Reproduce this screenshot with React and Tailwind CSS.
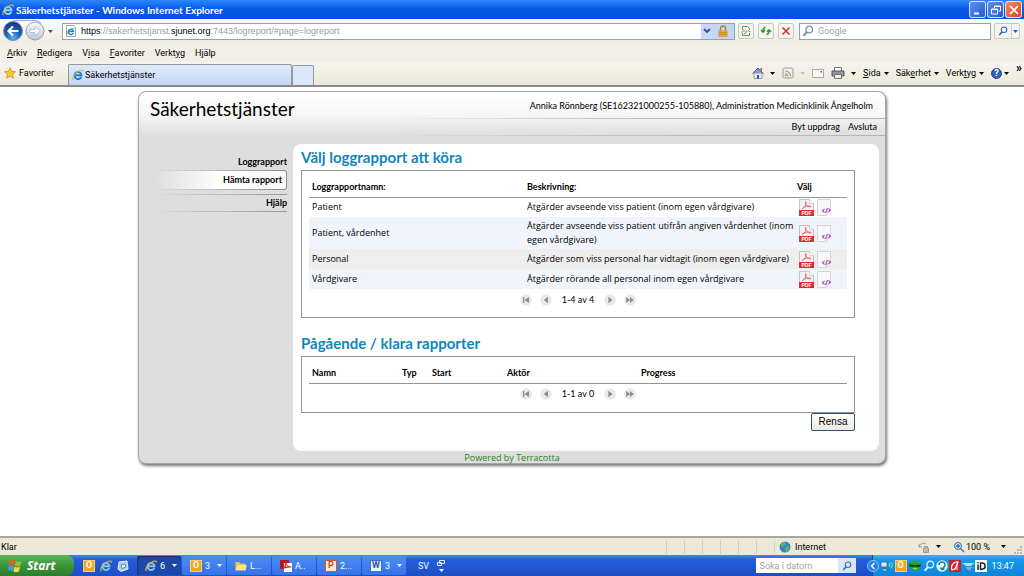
import clsx from 'clsx'
import { useState } from 'react'

const menuItems = [
  ['', 'A', 'rkiv'],
  ['', 'R', 'edigera'],
  ['V', 'i', 'sa'],
  ['', 'F', 'avoriter'],
  ['Verkt', 'y', 'g'],
  ['H', 'j', 'älp']
]

const toolItems = [
  ['', 'S', 'ida'],
  ['Säk', 'e', 'rhet'],
  ['Verk', 't', 'yg']
]

const reports = [
  { name: 'Patient', text: 'Åtgärder avseende viss patient (inom egen vårdgivare)', row: 'h-5' },
  { name: 'Patient, vårdenhet', text: 'Åtgärder avseende viss patient utifrån angiven vårdenhet (inom egen vårdgivare)', row: 'h-8 bg-[#f0f5fb]' },
  { name: 'Personal', text: 'Åtgärder som viss personal har vidtagit (inom egen vårdgivare)', row: 'h-5 bg-[#eeeeee]' },
  { name: 'Vårdgivare', text: 'Åtgärder rörande all personal inom egen vårdgivare', row: 'h-5 bg-[#f0f5fb]' }
]

function AccessKey({ parts }) {
  return <span>{parts[0]}<span className="underline">{parts[1]}</span>{parts[2]}</span>
}

function Caret({ className = 'text-black' }) {
  return <svg viewBox="0 0 5 3" className={clsx('h-[3px] w-[5px] shrink-0', className)}><path d="M0 0h5L2.500 3z" fill="currentColor" /></svg>
}

function IeIcon({ className = 'size-3', body = '#1c7fd6' }) {
  return (
    <svg viewBox="0 0 16 16" className={clsx('shrink-0', className)}>
      <path d="M12.400 10.400A4.700 4.700 0 1 1 12.700 8.400H4.300" fill="none" stroke={body} strokeWidth="2.600" />
      <path d="M2.200 14.800C-.8 13.500 2.500 7.500 7 4.200 11 1.200 15.600 0 15 3.400" fill="none" stroke="#f2b822" strokeWidth="1.500" />
    </svg>
  )
}

function IePage() {
  return (
    <svg viewBox="0 0 12 12" className="size-3 shrink-0">
      <path d="M1.500.5h7l2 2v9h-9z" fill="#fff" stroke="#9aa5ad" />
      <path d="M8.300 8A2.600 2.600 0 1 1 8.500 6.500H3.800" fill="none" stroke="#2483c5" strokeWidth="1.500" />
      <path d="M2 9.500C1.500 7.500 6 3 9.500 3.200" fill="none" stroke="#4aa557" strokeWidth=".8" />
    </svg>
  )
}

function Magnifier({ className = 'size-3 text-[#2860b8]' }) {
  return (
    <svg viewBox="0 0 12 12" className={clsx('shrink-0', className)} fill="none" stroke="currentColor">
      <circle cx="7.200" cy="4.500" r="3.300" strokeWidth="1.300" />
      <path d="M5 7L1.500 10.800" strokeWidth="1.900" />
    </svg>
  )
}

function NavArrows() {
  return (
    <svg viewBox="0 0 44 22" className="h-[22px] w-11 shrink-0">
      <defs>
        <radialGradient id="back" cx=".5" cy=".85" r=".8">
          <stop offset="0" stopColor="#55b2f2" />
          <stop offset=".5" stopColor="#1d5fb8" />
          <stop offset="1" stopColor="#123a84" />
        </radialGradient>
        <linearGradient id="fwd" x1="0" y1="0" x2="0" y2="1">
          <stop offset="0" stopColor="#f8fafc" />
          <stop offset="1" stopColor="#b9c6d6" />
        </linearGradient>
      </defs>
      <path d="M11 .5h23a10 10 0 0 1 5 3" fill="none" stroke="#a5afbd" />
      <circle cx="33" cy="11" r="9" fill="url(#fwd)" stroke="#97a3b5" />
      <path d="M28 9.500h5V6.500l5 4.500-5 4.500v-3h-5z" fill="#fff" stroke="#aab6c4" strokeWidth=".7" />
      <circle cx="11" cy="11" r="9.500" fill="url(#back)" stroke="#7f93b5" />
      <path d="M16.500 11H7M11 6.500L6.500 11l4.500 4.500" fill="none" stroke="#fff" strokeWidth="2.200" />
    </svg>
  )
}

function OfficeIcon({ letter, className }) {
  return <span className={clsx('flex size-3 shrink-0 items-center justify-center border text-[9px] leading-none font-bold', className)}>{letter}</span>
}

function Flag() {
  return (
    <svg viewBox="0 0 16 14" className="h-3.5 w-4 shrink-0">
      <path d="M3 1.500c2-1 3.500-.8 5 .2L7 6.500C5.500 5.500 4 5.300 2 6z" fill="#f0562b" />
      <path d="M8.700 2c1.800 1 3.500 1 5.800 0l-1.200 4.900c-2 .9-3.900.9-5.600-.1z" fill="#86c440" />
      <path d="M1.700 7c2-.8 3.600-.5 5 .4l-1.100 4.800c-1.500-1-3.100-1.200-5-.4z" fill="#4d92ee" />
      <path d="M7.400 7.700c1.900 1 3.700 1 5.700.1L12 12.600c-2 .9-4 .8-5.700-.2z" fill="#fbd238" />
    </svg>
  )
}

function PdfIcon() {
  return (
    <svg viewBox="0 0 15 17" className="h-[17px] w-[15px]">
      <path d="M.5.5h10l4 4v12H.5z" fill="#f1f1f1" stroke="#c3c3c3" />
      <path d="M10.500.5v4h4" fill="#fff" stroke="#c3c3c3" strokeWidth=".7" />
      <path d="M3.300 9.600c2.200-1 4-4 3.800-6.800-.7-1-1.100.8 0 2.600 1.100 1.900 3 2.800 5 2.400-.3-1-3.200-1-5-.4-1.800.5-3.300 1.200-3.800 2.200z" fill="none" stroke="#dd5555" strokeWidth=".8" />
      <path d="M0 11h15v6H0z" fill="#e32a2e" />
      <text x="7.500" y="16" textAnchor="middle" fontSize="5" fontWeight="bold" fontFamily="Liberation Sans, sans-serif" fill="#fff">PDF</text>
    </svg>
  )
}

function XmlIcon() {
  return (
    <svg viewBox="0 0 15 17" className="h-[17px] w-[15px]">
      <path d="M.5.5h13v11L9 16.500H.5z" fill="#f8f8fa" stroke="#d3d3d8" />
      <path d="M9 16.500l.5-4 4-1" fill="#e6e6ea" stroke="#c6c6cc" strokeWidth=".6" />
      <path d="M7.500 10L5.500 11.800l2 1.700M11.500 9.500l2 1.700-2 1.800M10.500 9l-2 5" fill="none" stroke="#b055b8" strokeWidth="1.200" />
    </svg>
  )
}

function PagerButton({ label, d }) {
  return (
    <button aria-label={label}>
      <svg viewBox="0 0 12 12" className="size-3">
        <circle cx="6" cy="6" r="5.800" fill="#e9e9e9" />
        <path d={d} fill="#8c8c8c" />
      </svg>
    </button>
  )
}

function Pager({ range }) {
  return (
    <div className="flex h-[22px] items-center justify-center pb-px">
      <div className="flex w-[116px] items-center gap-2">
        <PagerButton label="Första" d="M3 3h1.300v6H3zM9 3v6L4.500 6z" />
        <PagerButton label="Föregående" d="M8 2.800v6.400L3.800 6z" />
        <span className="flex-1 text-center whitespace-nowrap">{range}</span>
        <PagerButton label="Nästa" d="M4.400 2.800v6.400L8.600 6z" />
        <PagerButton label="Sista" d="M2.200 3v6L6 6zM6 3v6L9.800 6z" />
      </div>
    </div>
  )
}

function TitleBar() {
  const box = 'flex size-[17px] items-center justify-center rounded-[3px] border border-white/80'
  return (
    <header className="flex h-[19px] shrink-0 items-center bg-linear-to-b from-[#2b86fb] via-[#0458e4] to-[#0650dc] px-0.5 text-white">
      <IeIcon className="size-3" body="#8fd0ff" />
      <h1 className="ml-0.5 flex-1 font-['Lato',sans-serif] text-[10px] font-bold">Säkerhetstjänster - Windows Internet Explorer</h1>
      <div className="flex gap-px">
        <button aria-label="Minimera" className={clsx(box, 'bg-linear-to-br from-[#5f8ff2] to-[#2456d8]')}>
          <svg viewBox="0 0 12 12" className="size-3"><path d="M2 8.500h5v2H2z" fill="#fff" /></svg>
        </button>
        <button aria-label="Återställ" className={clsx(box, 'bg-linear-to-br from-[#5f8ff2] to-[#2456d8]')}>
          <svg viewBox="0 0 12 12" className="size-3" fill="none" stroke="#fff"><path d="M4.500 4V2h6v5h-2M4.500 2.500h6" /><path d="M1.500 5h6v5h-6zM1.500 5.500h6" /></svg>
        </button>
        <button aria-label="Stäng" className={clsx(box, 'bg-linear-to-br from-[#f08a66] to-[#d8421c]')}>
          <svg viewBox="0 0 12 12" className="size-3"><path d="M2 2l8 8M10 2l-8 8" stroke="#fff" strokeWidth="1.700" /></svg>
        </button>
      </div>
    </header>
  )
}

function AddressBar() {
  const tool = 'flex h-4 w-4 items-center justify-center rounded-xs border border-[#c5c8c0] bg-[#f6f6ef]'
  return (
    <div className="flex h-6 shrink-0 items-center bg-linear-to-b from-[#fbfbf9] to-[#efede2] pr-1 pl-0.5">
      <NavArrows />
      <Caret className="mr-2 ml-px h-1 w-[7px] text-[#1d5a9c]" />
      <div className="relative flex h-[17px] flex-1 items-center border border-[#8fa3b5] bg-white">
        <input aria-label="Adress" className="absolute inset-0 bg-transparent outline-none" />
        <span className="pointer-events-none relative flex flex-1 items-center gap-1 pl-0.5 whitespace-nowrap">
          <IePage />
          <span className="font-['Liberation_Sans',sans-serif] text-[#9c9c9c]"><span className="text-black">https</span>://sakerhetstjanst.<span className="text-black">sjunet.org</span>:7443/logreport/#page=logreport</span>
        </span>
        <button aria-label="Visa adresser" className="relative flex h-full w-[11px] items-center justify-center bg-[#c9d9fb]">
          <svg viewBox="0 0 8 6" className="h-1.5 w-2"><path d="M1 1l3 3 3-3" fill="none" stroke="#33518c" strokeWidth="1.800" /></svg>
        </button>
        <button aria-label="Säkerhetsrapport" className="relative flex h-full w-[22px] items-center justify-center bg-[#c3d6f3]">
          <svg viewBox="0 0 12 12" className="size-3"><path d="M3.500 6V3.500a2.500 2.500 0 0 1 5 0V6" fill="none" stroke="#b08425" strokeWidth="1.400" /><path d="M1.500 5.500h9V12h-9z" fill="#e3a52f" /><path d="M1.500 7.500h9M1.500 9.500h9" stroke="#c08420" strokeWidth=".6" /></svg>
        </button>
      </div>
      <div className="ml-[3px] flex gap-1">
        <button aria-label="Kompatibilitetsvy" className={tool}>
          <svg viewBox="0 0 12 12" className="size-3 shrink-0" fill="none" stroke="#4ba04f"><path d="M2.500 5V1.500h5l2 2V5M2.500 8v2.500h7V8" /><path d="M1.500 7.500L4 5.500l2 2 2-2 2.500 1.500M4 9l2-1.500" strokeWidth=".9" /></svg>
        </button>
        <button aria-label="Uppdatera" className={tool}>
          <svg viewBox="0 0 12 12" className="size-3 shrink-0" fill="none" stroke="#2c9a34" strokeWidth="1.500"><path d="M5.500 2.500C3.500 2.500 3 4 3 7M1 5l2 2.200L5 5M6.500 9.500C8.500 9.500 9 8 9 5M7 7l2-2.200L11 7" /></svg>
        </button>
        <button aria-label="Stoppa" className={tool}>
          <svg viewBox="0 0 12 12" className="size-3 shrink-0"><path d="M2.500 2.500l7 7M9.500 2.500l-7 7" stroke="#cf2f36" strokeWidth="1.500" /></svg>
        </button>
      </div>
      <label className="ml-[5px] flex h-[17px] w-48 items-center gap-1 border border-[#8fa3b5] bg-white px-0.5">
        <Magnifier className="size-3 text-[#6f93b5]" />
        <input aria-label="Sök" placeholder="Google" className="min-w-0 flex-1 outline-none placeholder:text-[#a3a3a3]" />
      </label>
      <div className="ml-[3px] flex h-4 w-[26px] items-center rounded-xs border border-[#c5c8c0] bg-[#f3f5f4]">
        <button aria-label="Sök på webben" className="flex flex-1 justify-center"><Magnifier className="size-2.5 text-[#2860b8]" /></button>
        <button aria-label="Sökalternativ" className="flex h-full w-2 items-center justify-center border-l border-[#d0d3cc]"><Caret className="text-[#2860b8]" /></button>
      </div>
    </div>
  )
}

function TabRow() {
  return (
    <div className="flex h-[23px] shrink-0 bg-linear-to-b from-[#f6f5ef] to-[#ece9d8]">
      <button className="flex w-[68px] items-center gap-[3px] pb-px pl-1">
        <svg viewBox="0 0 12 12" className="size-3 shrink-0"><path d="M6 .8l1.600 3.500 3.900.4-2.900 2.600.8 3.900L6 9.200l-3.400 2 .8-3.900L.5 4.700l3.900-.4z" fill="#fbc63a" stroke="#d28d1c" strokeWidth=".8" /></svg>
        Favoriter
      </button>
      <button className="mt-0.5 flex w-56 items-center gap-px rounded-t-xs border border-b-0 border-[#919b9c] bg-linear-to-b from-[#dfe9fb] to-[#c5d8f8] pl-[3px]">
        <IeIcon className="size-3" /><span>Säkerhetstjänster</span>
      </button>
      <button aria-label="Ny flik" className="mt-[3px] w-[22px] rounded-t-xs border border-b-0 border-[#919b9c] bg-[#dce8fa]" />
      <div className="ml-auto flex items-center gap-[7px] pr-0.5 pb-px">
        <button aria-label="Startsida" className="flex items-center gap-1.5">
          <svg viewBox="0 0 12 12" className="size-3"><path d="M2 6v5.500h8V6" fill="#e9eef8" stroke="#7584a8" strokeWidth=".8" /><path d="M.5 6.500L6 1l5.500 5.500" fill="#8797c4" stroke="#4c5d8b" /><path d="M8.500 1h1.500v3L8.500 2.500z" fill="#b34a35" /><path d="M5 8h2v3.500H5z" fill="#2f4a93" /></svg>
          <Caret />
        </button>
        <button aria-label="Feeds" className="flex items-center gap-1.5">
          <svg viewBox="0 0 12 12" className="size-3" fill="none" stroke="#999"><rect x="1" y="1" width="10" height="10" rx="1.500" fill="#f0efe8" /><path d="M3 6.500A2.800 2.800 0 0 1 5.800 9.300M3 4a5.300 5.300 0 0 1 5.500 5.300" strokeWidth="1.100" /><circle cx="3.700" cy="8.600" r=".6" /></svg>
          <Caret className="text-[#c5c3b8]" />
        </button>
        <button aria-label="Läs e-post">
          <svg viewBox="0 0 12 12" className="size-3"><path d="M.5 2.500h11v8H.5z" fill="#f7f7f7" stroke="#aaa" /><path d="M8.500 4h1.500v1.500H8.500z" fill="#c37" /></svg>
        </button>
        <button aria-label="Skriv ut" className="flex items-center gap-1.5">
          <svg viewBox="0 0 14 12" className="h-3 w-3.5"><path d="M3.500.5h7V5h-7z" fill="#fff" stroke="#777" /><path d="M1 4h12v5H1z" fill="#8f959b" stroke="#555b61" /><path d="M3.500 7.500h7v4h-7z" fill="#eee" stroke="#777" /><path d="M10.500 5.200h1.500v1h-1.500z" fill="#5fd35f" /></svg>
          <Caret />
        </button>
        {toolItems.map((item) => (
          <button key={item[1]} className="flex items-center gap-[3px]"><AccessKey parts={item} /><Caret /></button>
        ))}
        <button aria-label="Hjälp" className="flex items-center gap-0.5">
          <span className="flex size-[11px] items-center justify-center rounded-full border border-[#20448f] bg-[#3565b9] text-[9px] leading-none font-bold text-white">?</span>
          <Caret />
        </button>
        <button aria-label="Fler verktyg" className="self-start text-[12px] leading-none font-bold">»</button>
      </div>
    </div>
  )
}

function SideNav() {
  const line = 'h-px w-full bg-linear-to-r from-transparent to-[#949494]'
  return (
    <nav className="flex w-[154px] shrink-0 flex-col items-end pt-2.5 pr-1.5 pl-4 font-bold">
      <a href="#logg" className="h-4 leading-4">Loggrapport</a>
      <div className="w-full rounded-r-[3px] bg-linear-to-r from-transparent to-[#8c8c8c] p-px pl-0">
        <a href="#hamta" className="block h-[18px] rounded-r-xs bg-linear-to-r from-[#dedede] via-white to-[#fafafa] pr-1 text-right leading-[18px]">Hämta rapport</a>
      </div>
      <div className="h-1" />
      <div className={line} />
      <a href="#hjalp" className="h-4 leading-4">Hjälp</a>
      <div className={line} />
    </nav>
  )
}

function ReportTable() {
  return (
    <div className="border border-[#949494] px-[7px] pt-1.5 pb-1.5">
      <table className="w-full table-fixed text-left">
        <thead>
          <tr className="h-5 border-b border-[#949494]">
            <th className="w-[215px] pl-[3px]">Loggrapportnamn:</th>
            <th className="pl-[3px]">Beskrivning:</th>
            <th className="w-[50px]">Välj</th>
          </tr>
        </thead>
        <tbody className="font-['Open_Sans',sans-serif]">
          {reports.map((r) => (
            <tr key={r.name} className={r.row}>
              <td className="pl-[3px]">{r.name}</td>
              <td className="py-0.5 pl-[3px] leading-[14px]">{r.text}</td>
              <td>
                <div className="flex gap-[3px] pl-0.5">
                  <button aria-label={`${r.name} PDF`}><PdfIcon /></button>
                  <button aria-label={`${r.name} XML`}><XmlIcon /></button>
                </div>
              </td>
            </tr>
          ))}
        </tbody>
      </table>
      <Pager range="1-4 av 4" />
    </div>
  )
}

function RunningTable() {
  return (
    <div className="border border-[#949494] px-[7px] pt-1.5 pb-1.5">
      <table className="w-full table-fixed text-left">
        <thead>
          <tr className="h-5 border-b border-[#949494]">
            <th className="w-[90px] pl-[3px]">Namn</th>
            <th className="w-[30px] pl-[3px]">Typ</th>
            <th className="w-[75px] pl-[3px]">Start</th>
            <th className="w-[134px] pl-[3px]">Aktör</th>
            <th className="pl-[3px]">Progress</th>
          </tr>
        </thead>
      </table>
      <Pager range="1-1 av 0" />
    </div>
  )
}

function Portal() {
  const line = 'h-px w-full bg-linear-to-r from-transparent via-[#c0c0c0] to-[#b4b4b4]'
  return (
    <div className="mx-auto w-full max-w-[748px] rounded-lg border border-[#a5a5a5] bg-[#dedede] font-['Lato',sans-serif] text-[9px] shadow-[1px_2px_3px_#777]">
      <div className="flex justify-between rounded-t-lg bg-linear-to-b from-white via-[#f7f7f7] to-[#dedede] pl-[11px]">
        <h2 className="w-60 pt-[5px] text-[19px] leading-6">Säkerhetstjänster</h2>
        <div className="flex-1 text-right">
          <p className="h-[26px] pr-3 leading-7">Annika Rönnberg (SE162321000255-105880), Administration Medicinklinik Ångelholm</p>
          <div className={line} />
          <div className="flex h-4 items-center justify-end gap-2 pr-2">
            <a href="#uppdrag">Byt uppdrag</a>
            <a href="#avsluta">Avsluta</a>
          </div>
          <div className={line} />
        </div>
      </div>
      <div className="flex pt-2 pr-1.5">
        <SideNav />
        <main className="min-w-0 flex-1 rounded-lg bg-white px-2 pr-6 pb-5">
          <h3 className="h-[26px] text-[15px] leading-[26px] font-bold text-[#0f86bd]">Välj loggrapport att köra</h3>
          <ReportTable />
          <h3 className="mt-3 h-[26px] text-[15px] leading-[26px] font-bold text-[#0f86bd]">Pågående / klara rapporter</h3>
          <RunningTable />
          <div className="flex justify-end">
            <button className="h-[18px] w-11 rounded-xs border border-[#2c4f78] bg-linear-to-b from-white to-[#ece9e0] font-['Liberation_Sans',sans-serif] text-[10px] leading-none">Rensa</button>
          </div>
        </main>
      </div>
      <p className="h-3 text-center font-['Open_Sans',sans-serif] leading-[14px] text-[#1e8520]">Powered by Terracotta</p>
    </div>
  )
}

function StatusBar() {
  return (
    <div className="flex h-[19px] shrink-0 items-center border-t-2 border-[#a9a898] bg-[#ece9d8]">
      <span className="flex-1 pl-px">Klar</span>
      {[0, 1, 2, 3, 4, 5].map((i) => <span key={i} className="h-3.5 w-[18px] border-l border-[#d3d0c0]" />)}
      <span className="flex w-36 items-center gap-1 border-l border-[#d3d0c0] pl-1">
        <svg viewBox="0 0 12 12" className="size-3"><circle cx="6" cy="6" r="5.500" fill="#3484c6" /><path d="M2 3c2-2 4-2 5-1L5 5 2 6zM6 6l4-1v3L7 11z" fill="#5bb85b" /></svg>
        Internet
      </span>
      <button aria-label="Skyddat läge" className="flex items-center gap-1.5">
        <svg viewBox="0 0 12 12" className="size-3" fill="none" stroke="#999"><path d="M1 6c1-3 4-5 7-3M1 3v3h3" /><path d="M5.500 7h5v4.500h-5z" fill="#bbb" /><path d="M6.500 7V5.500h3V7" /></svg>
        <Caret />
      </button>
      <button className="ml-3 flex items-center gap-px">
        <svg viewBox="0 0 12 12" className="size-3" fill="none" stroke="#3568ad"><circle cx="5" cy="5" r="3.500" fill="#d9e9fa" /><path d="M3 5h4M5 3v4M7.500 7.500l3.500 3.500" strokeWidth="1.300" /></svg>
        100 %
        <Caret className="ml-2.5 text-black" />
      </button>
      <svg viewBox="0 0 9 9" className="mr-px ml-2 size-[9px] self-end"><path d="M6 0h2v2H6zM3 3h2v2H3zM6 3h2v2H6zM0 6h2v2H0zM3 6h2v2H3zM6 6h2v2H6z" fill="#bab7a6" /></svg>
    </div>
  )
}

function TaskButton({ children, active, caret }) {
  return (
    <button className={clsx('flex h-[19px] w-11 items-center gap-[3px] rounded-xs pl-2', active ? 'bg-[#1c48a8] shadow-[inset_1px_1px_2px_#0f2f78]' : 'bg-linear-to-b from-[#4b8cf8] to-[#3573e8]')}>
      {children}
      {caret && <Caret className="mr-1 ml-auto text-white" />}
    </button>
  )
}

function Taskbar() {
  const outlook = 'border-[#f7d268] bg-[#f3a51d] text-white'
  return (
    <footer className="flex h-[21px] shrink-0 items-center bg-linear-to-b from-[#4488f0] via-[#245edc] via-20% to-[#1d4fc4] text-white">
      <button className="flex h-full w-[74px] items-center gap-1 rounded-r-lg bg-linear-to-b from-[#5cb55a] via-[#3a963a] to-[#2c7d2c] pl-[7px] font-['Open_Sans',sans-serif] text-[12px] font-bold italic">
        <Flag />Start
      </button>
      <div className="mr-2 ml-[9px] flex items-center gap-[5px]">
        <OfficeIcon letter="O" className={outlook} />
        <IeIcon className="size-3" body="#79c4ff" />
        <svg viewBox="0 0 12 12" className="size-3"><path d="M2 2l8-1 1 8-7 2.500L1 9z" fill="#a9d3f5" stroke="#e7f3fc" /><path d="M4 5l4-1 1 3-4 1.500z" fill="#fff" stroke="#376bb0" strokeWidth=".8" /></svg>
      </div>
      <div className="flex gap-px">
        <TaskButton active caret><IeIcon className="size-3" body="#79c4ff" />6</TaskButton>
        <TaskButton caret><OfficeIcon letter="O" className={outlook} />3</TaskButton>
        <TaskButton>
          <svg viewBox="0 0 12 12" className="size-3 shrink-0"><path d="M.5 2h4l1 1.500h5V10H.5z" fill="#f4c542" /><path d="M2.500 5h9.300L10.500 10.500h-10z" fill="#fde58a" /></svg>
          L...
        </TaskButton>
        <TaskButton>
          <svg viewBox="0 0 12 12" className="size-3 shrink-0"><path d="M0 0h9v9H0z" fill="#b8141c" /><path d="M4 3h8v9H4z" fill="#fff" /><path d="M2 9c3-1 4-4 3.500-7 .5 3 3 5 6 5-3-.5-6 0-9.500 2z" fill="none" stroke="#d22" strokeWidth="1.100" /></svg>
          A..
        </TaskButton>
        <TaskButton><OfficeIcon letter="P" className="border-[#d3532a] bg-[#fbe9e0] text-[#cf4a1d]" />2...</TaskButton>
        <TaskButton caret><OfficeIcon letter="W" className="border-[#3d78c8] bg-[#eef5fd] text-[#1f57a8]" />3</TaskButton>
      </div>
      <span className="ml-3">SV</span>
      <button aria-label="Visa fler" className="ml-2 flex flex-col items-center gap-[3px]">
        <svg viewBox="0 0 8 6" className="h-1.5 w-2" fill="none" stroke="#fff"><path d="M2.500.5h5v3h-5zM.5 2.500h4v3h-4z" strokeWidth=".9" /></svg>
        <Caret className="text-white" />
      </button>
      <label className="ml-auto flex h-[15px] w-[100px] items-center bg-white pl-1 text-black">
        <input aria-label="Sök i datorn" placeholder="Söka i datorn" className="min-w-0 flex-1 outline-none placeholder:text-[#a3a3a3]" />
        <span className="flex h-full w-[18px] items-center justify-center bg-[#d9e6f8]"><Magnifier className="size-2.5 text-[#3b6cae]" /></span>
      </label>
      <div className="ml-4 flex h-full items-center gap-px border-l border-[#0c4ba8] bg-linear-to-b from-[#3fb2f5] via-[#149aec] via-20% to-[#1183da] pr-2.5">
        <button aria-label="Visa dolda ikoner" className="-ml-1.5 flex size-3 items-center justify-center rounded-full border border-[#8ccaff] bg-[#2a7be6]">
          <svg viewBox="0 0 6 8" className="h-2 w-1.5"><path d="M4.500 1l-3 3 3 3" fill="none" stroke="#fff" strokeWidth="1.500" /></svg>
        </button>
        <svg viewBox="0 0 14 12" className="h-3 w-3.5"><path d="M1 2h6v5H1zM3 9h4v2H2z" fill="#dbe8f5" stroke="#34618f" strokeWidth=".8" /><path d="M9 3c1 1 1 3 0 4M11 2c1.500 2 1.500 4.500 0 6.500M13 1" fill="none" stroke="#8bea6d" /></svg>
        <OfficeIcon letter="O" className={outlook} />
        <svg viewBox="0 0 14 12" className="h-3 w-3.5"><path d="M3.500 1.500L7 .5l3.500 1L13.500 5l-2 3L7 11.500 2.500 8l-2-3z" fill="#2ca032" /><path d="M.5 4.500l5.500.5h2l5.500-.5L12 7H9L7 6 5 7H2z" fill="#0b3b12" /><path d="M4 8h6L7 10z" fill="#7bdc63" /></svg>
        <Magnifier className="size-3 text-[#e1f0fd]" />
        <svg viewBox="0 0 12 12" className="size-3"><circle cx="6" cy="6" r="5.700" fill="#eefaff" /><path d="M3 5a3 3 0 0 1 6 0c0 2-2 3-3 4M4.500 7.500L6 9.500l2.500-.5" fill="none" stroke="#168aa8" strokeWidth="1.600" /></svg>
        <svg viewBox="0 0 12 12" className="size-3"><path d="M0 0h12v12H0z" fill="#cf1f2c" /><path d="M3 10C1 6 5 1 9 2L6 9z" fill="none" stroke="#fff" strokeWidth="1.200" /><path d="M8 4v6" stroke="#fff" /></svg>
        <svg viewBox="0 0 12 12" className="size-3"><path d="M0 3h12L9 6H4z" fill="#c9d7e4" /><path d="M3 7h8L7 11z" fill="#8ea9c3" /></svg>
        <svg viewBox="0 0 12 12" className="size-3"><path d="M0 0h12v12H0z" fill="#fff" /><path d="M3 4.500V10M3 2v1.300M5.500 3H7a3 3 0 0 1 0 6.200H5.500z" fill="none" stroke="#222" strokeWidth="1.500" /></svg>
        <time className="ml-1">13:47</time>
      </div>
    </footer>
  )
}

export default function App() {
  const [open, setOpen] = useState(null)

  return (
    <div className="flex min-h-screen flex-col bg-white font-['Roboto',sans-serif] text-[9px] leading-3 text-black">
      <TitleBar />
      <AddressBar />
      <nav className="flex h-[19px] shrink-0 items-center gap-2.5 bg-[#f1efe6] px-[7px]">
        {menuItems.map((item) => (
          <button key={item.join('')} onClick={() => setOpen(open === item ? null : item)}><AccessKey parts={item} /></button>
        ))}
      </nav>
      <TabRow />
      <div className="flex-1 border-t-2 border-[#8b8b85] px-1 pt-1 pb-4">
        <Portal />
      </div>
      <StatusBar />
      <Taskbar />
    </div>
  )
}
